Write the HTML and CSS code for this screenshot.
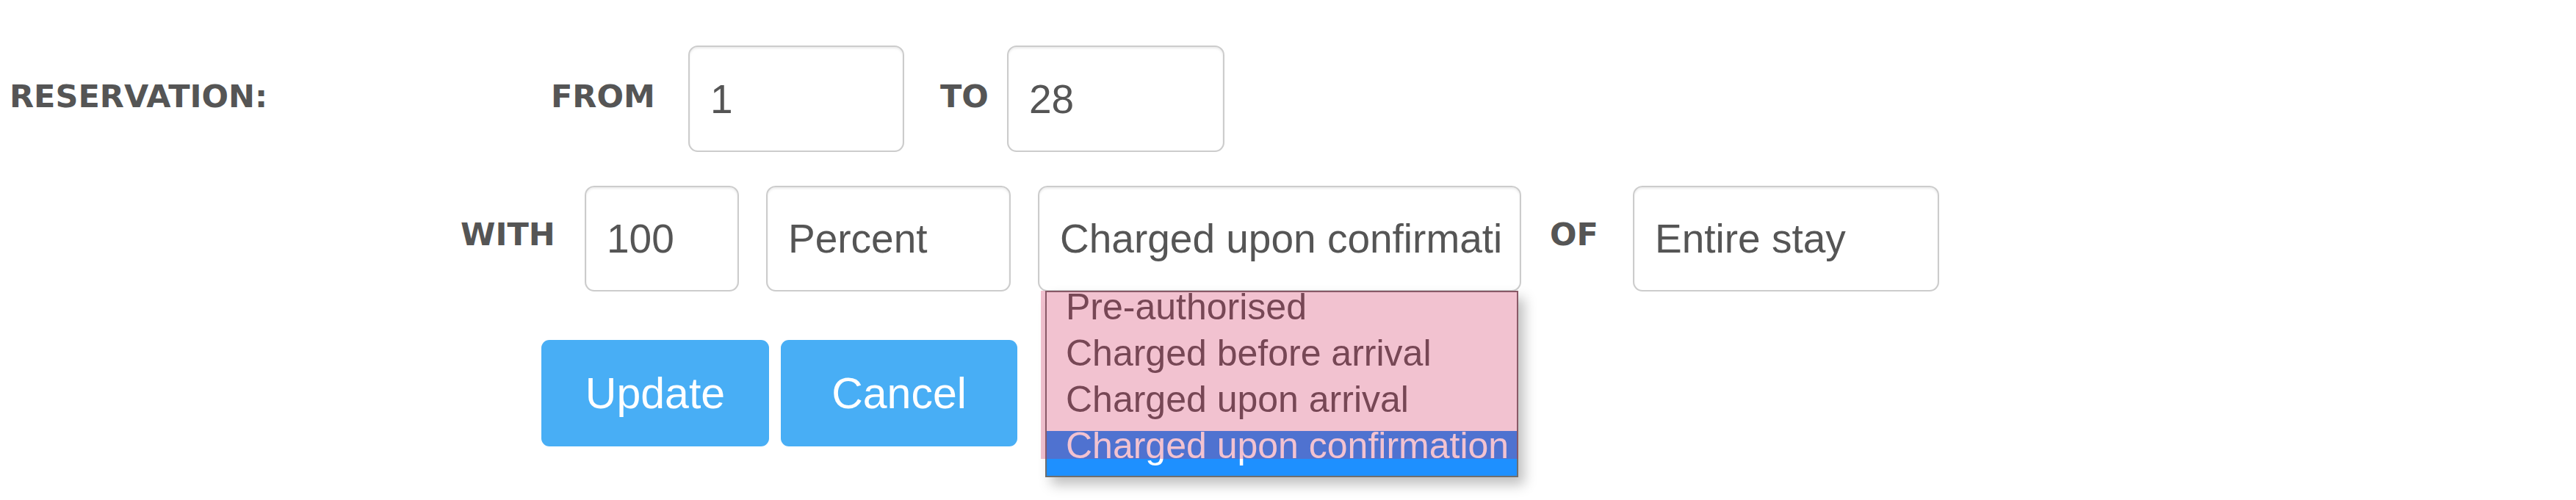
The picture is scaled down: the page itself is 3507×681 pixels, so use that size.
FILE: index.html
```html
<!DOCTYPE html>
<html lang="en">
<head>
<meta charset="utf-8">
<title>Reservation policy</title>
<link rel="stylesheet" href="styles.css">
</head>
<body>
<form class="policy">
  <div class="row row-range">
    <div class="section-label">RESERVATION:</div>
    <div class="label label-from">FROM</div>
    <div class="field field-from">1</div>
    <div class="label label-to">TO</div>
    <div class="field field-to">28</div>
  </div>
  <div class="row row-amount">
    <div class="label label-with">WITH</div>
    <div class="field field-amount">100</div>
    <div class="field field-unit">Percent</div>
    <div class="select-wrap">
      <div class="field field-charge"><span class="select-value">Charged upon confirmation</span></div>
      <ul class="options">
        <li class="option">Pre-authorised</li>
        <li class="option">Charged before arrival</li>
        <li class="option">Charged upon arrival</li>
        <li class="option selected">Charged upon confirmation</li>
      </ul>
      <div class="highlight"></div>
    </div>
    <div class="label label-of">OF</div>
    <div class="field field-scope">Entire stay</div>
  </div>
  <div class="row row-actions">
    <button type="button" class="btn btn-update">Update</button>
    <button type="button" class="btn btn-cancel">Cancel</button>
  </div>
</form>
</body>
</html>
```

FILE: styles.css
```css
html, body {
  margin: 0;
  padding: 0;
  background: #ffffff;
}

body {
  width: 3507px;
  height: 681px;
  overflow: hidden;
  font-family: "Liberation Sans", Arial, sans-serif;
}

.policy {
  padding-top: 62px;
}

.row {
  display: flex;
  align-items: flex-start;
}

.row-range {
  padding-left: 13px;
  height: 145px;
}

.row-amount {
  margin-top: 46px;
  padding-left: 627px;
  height: 144px;
}

.row-actions {
  margin-top: 66px;
  padding-left: 737px;
  gap: 16px;
}

.section-label,
.label {
  font-family: "DejaVu Sans", sans-serif;
  font-weight: bold;
  font-size: 43px;
  line-height: 43px;
  color: #555555;
  white-space: nowrap;
}

.row-range .section-label,
.row-range .label {
  padding-top: 48px;
}

.row-amount .label {
  padding-top: 45px;
}

.section-label {
  width: 737px;
}

.label-from {
  width: 140px;
  margin-right: 47px;
}

.label-to {
  width: 63px;
  margin-left: 49px;
  margin-right: 28px;
}

.label-with {
  width: 121px;
  margin-right: 48px;
}

.label-of {
  width: 63px;
  margin-left: 39px;
  margin-right: 50px;
}

.field {
  box-sizing: border-box;
  height: 145px;
  display: flex;
  align-items: center;
  padding: 0 28px;
  background: #ffffff;
  border: 2px solid #cccccc;
  border-radius: 13px;
  box-shadow: inset 0 2px 3px rgba(0, 0, 0, 0.08);
  font-size: 55px;
  color: #555555;
  white-space: nowrap;
  overflow: hidden;
}

.row-amount .field {
  height: 144px;
}

.field-from { width: 294px; }
.field-to { width: 296px; }
.field-amount { width: 210px; }
.field-unit { width: 333px; margin-left: 37px; }
.field-scope { width: 417px; }

.select-wrap {
  position: relative;
  margin-left: 37px;
  width: 658px;
}

.field-charge {
  width: 658px;
  padding-right: 20px;
}

.select-value {
  display: block;
  width: 603px;
  overflow: hidden;
  white-space: nowrap;
}

.options {
  position: absolute;
  top: 143px;
  left: 10px;
  width: 644px;
  box-sizing: border-box;
  margin: 0;
  padding: 0;
  list-style: none;
  background: #ffffff;
  border: 2px solid #6e6e6e;
  box-shadow: 8px 10px 16px rgba(0, 0, 0, 0.25);
  z-index: 2;
}

.option {
  height: 63px;
  box-sizing: border-box;
  padding: 0 0 0 26px;
  font-size: 50px;
  line-height: 40px;
  color: #555555;
  white-space: nowrap;
}

.option.selected {
  height: 61px;
  background: #1e90ff;
  color: #ffffff;
}

.highlight {
  position: absolute;
  top: 143px;
  left: 4px;
  width: 650px;
  height: 229px;
  background: rgba(208, 37, 87, 0.28);
  z-index: 3;
  pointer-events: none;
}

.btn {
  box-sizing: border-box;
  height: 145px;
  border: none;
  border-radius: 11px;
  background: #48aef5;
  color: #ffffff;
  font-family: "Liberation Sans", Arial, sans-serif;
  font-size: 59px;
  padding: 0;
  cursor: pointer;
}

.btn-update { width: 310px; }
.btn-cancel { width: 322px; }
```
